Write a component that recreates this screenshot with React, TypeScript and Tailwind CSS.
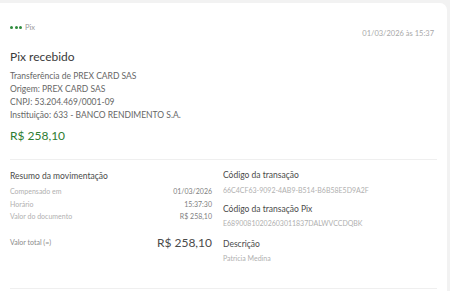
import React from "react";

export default function App() {
  return (
    <div className="w-[450px] h-[291px] bg-[#f2f2f2] pt-[3px] overflow-hidden" style={{ fontFamily: 'Lato, "Open Sans", sans-serif' }}>
      <div className="w-[447px] h-[300px] bg-white rounded-tr-[7px] px-[10px] pt-[20px]">
        <div className="flex items-start justify-between pr-[3px]">
          <div className="flex items-center gap-[3px] mt-[1px]">
            <div className="flex gap-[1.5px]">
              <span className="w-[3px] h-[3px] rounded-full bg-[#2e8b3d]" />
              <span className="w-[3px] h-[3px] rounded-full bg-[#2e8b3d]" />
              <span className="w-[3px] h-[3px] rounded-full bg-[#2e8b3d]" />
            </div>
            <span className="text-[7.5px] text-[#9a9a9a] leading-none">Pix</span>
          </div>
          <span className="text-[7.5px] text-[#a8a8a8] leading-none mt-[7px]">01/03/2026 às 15:37</span>
        </div>
        <div className="mt-[13px] text-[12px] text-[#3a3a3a] leading-none">Pix recebido</div>
        <div className="mt-[7px] text-[8.5px] text-[#666] leading-[13.3px]">
          <div>Transferência de PREX CARD SAS</div>
          <div>Origem: PREX CARD SAS</div>
          <div>CNPJ: 53.204.469/0001-09</div>
          <div>Instituição: 633 - BANCO RENDIMENTO S.A.</div>
        </div>
        <div className="mt-[7px] text-[12px] text-[#2e7d32] leading-none">R$ 258,10</div>
        <div className="mt-[17px] h-px bg-[#efefef] w-[427px]" />
        <div className="flex mt-[12px]">
          <div className="w-[202px]">
            <div className="text-[8.5px] text-[#4a4a4a] leading-none">Resumo da movimentação</div>
            <div className="mt-[5px] text-[7px] text-[#b0b0b0] leading-[12.5px]">
              <div className="flex justify-between"><span>Compensado em</span><span className="text-[#808080]">01/03/2026</span></div>
              <div className="flex justify-between"><span>Horário</span><span className="text-[#808080]">15:37:30</span></div>
              <div className="flex justify-between"><span>Valor do documento</span><span className="text-[#808080]">R$ 258,10</span></div>
            </div>
            <div className="flex justify-between items-center mt-[14px]">
              <span className="text-[7px] text-[#8a8a8a]">Valor total (=)</span>
              <span className="text-[12px] text-[#4a4a4a] leading-none">R$ 258,10</span>
            </div>
          </div>
          <div className="ml-[11px]">
            <div className="-mt-[1px] text-[8.5px] text-[#4a4a4a] leading-none">Código da transação</div>
            <div className="mt-[8px] text-[7px] text-[#b0b0b0] leading-none">66C4CF63-9092-4AB9-B514-B6B58E5D9A2F</div>
            <div className="mt-[11px] text-[8.5px] text-[#4a4a4a] leading-none">Código da transação Pix</div>
            <div className="mt-[6px] text-[7px] text-[#b0b0b0] leading-none">E68900810202603011837DALWVCCDQBK</div>
            <div className="mt-[13px] text-[8.5px] text-[#4a4a4a] leading-none">Descrição</div>
            <div className="mt-[7px] text-[7px] text-[#b0b0b0] leading-none">Patricia Medina</div>
          </div>
        </div>
        <div className="mt-[26px] h-px bg-[#efefef] w-[427px]" />
      </div>
    </div>
  );
}
